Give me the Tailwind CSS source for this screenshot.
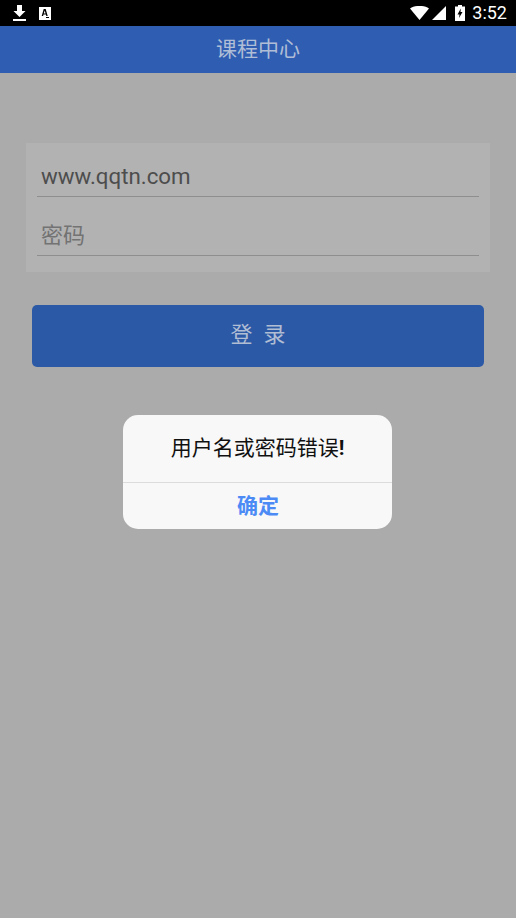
<!DOCTYPE html>
<html lang="zh">
  <head>
    <meta charset="UTF-8" />
    <meta name="viewport" content="width=device-width, initial-scale=1.0" />
    <title>课程中心</title>
    <script src="https://cdn.jsdelivr.net/npm/@tailwindcss/browser@4"></script>
  </head>
  <body>
    <div class="relative w-[516px] h-[918px] overflow-hidden bg-[#ababab] font-['Roboto','Noto_Sans_CJK_SC',sans-serif]">
      <!-- status bar -->
      <div class="h-[26px] bg-black flex items-center justify-between pl-[13px] pr-[9px] text-white">
        <div class="flex items-center gap-[13px]">
          <svg width="13" height="16" viewBox="0 0 13 16" fill="#fff"><path d="M4 0h5v6h3.500L6.500 12 .5 6H4zM0 14h13v2H0z" /></svg>
          <svg width="12" height="13" viewBox="0 0 12 13"><path fill="#fff" d="M0 0h12v13H0z" /><path fill="#000" fill-rule="evenodd" d="M4.700 2h2l2 7H7.300l-.4-1.500H4.500L4.100 9H2.700zM5.700 3.500 4.800 6.500h1.800zM7 10h3v1H7z" /></svg>
        </div>
        <div class="flex items-center">
          <svg width="19" height="14" viewBox="0 0 19 14" fill="#fff"><path d="M0 2.500C5-1 14-1 19 2.500L9.500 14z" /></svg>
          <svg class="ml-[3px]" width="14" height="14" viewBox="0 0 14 14" fill="#fff"><path d="M14 0v14H0z" /></svg>
          <svg class="ml-[9px]" width="10" height="16" viewBox="0 0 10 16"><path fill="#fff" d="M3 0h4v1.500h3V16H0V1.500h3z" /><path fill="#000" d="M5.800 3.500 2.500 9.500h2L4 13l3.500-6h-2z" /></svg>
          <span class="ml-[7px] text-[18px] leading-[26px]">3:52</span>
        </div>
      </div>

      <!-- header -->
      <div class="h-[47px] bg-[#2e5db2] flex items-center justify-center pt-[1px] text-[21px] text-[#b0bdd6]">课程中心</div>

      <!-- login form -->
      <div class="mt-[70px] mx-[26px] h-[129px] bg-[#b2b2b2] px-[11px] pt-[1px]">
        <div class="h-[53px] border-b border-[#8e8e8e] pl-[4px] flex items-end pb-[4px] text-[22.300px] leading-[32px] text-[#4d4d4d]">www.qqtn.com</div>
        <div class="h-[59px] border-b border-[#8e8e8e] pl-[4px] flex items-end pb-[3px] text-[22px] leading-[32px] text-[#737373]">密码</div>
      </div>
      <div class="mt-[33px] mx-[32px] h-[62px] bg-[#2c59a6] rounded-[5px] flex items-center justify-center pb-[3px] text-[22px] text-[#b0bdd3]">登&nbsp;&nbsp;录</div>

      <!-- alert dialog -->
      <div class="absolute left-[123px] top-[415px] w-[269px] h-[114px] rounded-[15px] bg-[#f8f8f8] flex flex-col">
        <div class="h-[68px] border-b border-[#dcdcdc] flex items-center justify-center text-[21px] text-[#111]">用户名或密码错误<b>!</b></div>
        <div class="flex-1 flex items-center justify-center pl-[1px] pt-[1px] text-[21px] font-bold text-[#4c8bf5]">确定</div>
      </div>
    </div>
  </body>
</html>
